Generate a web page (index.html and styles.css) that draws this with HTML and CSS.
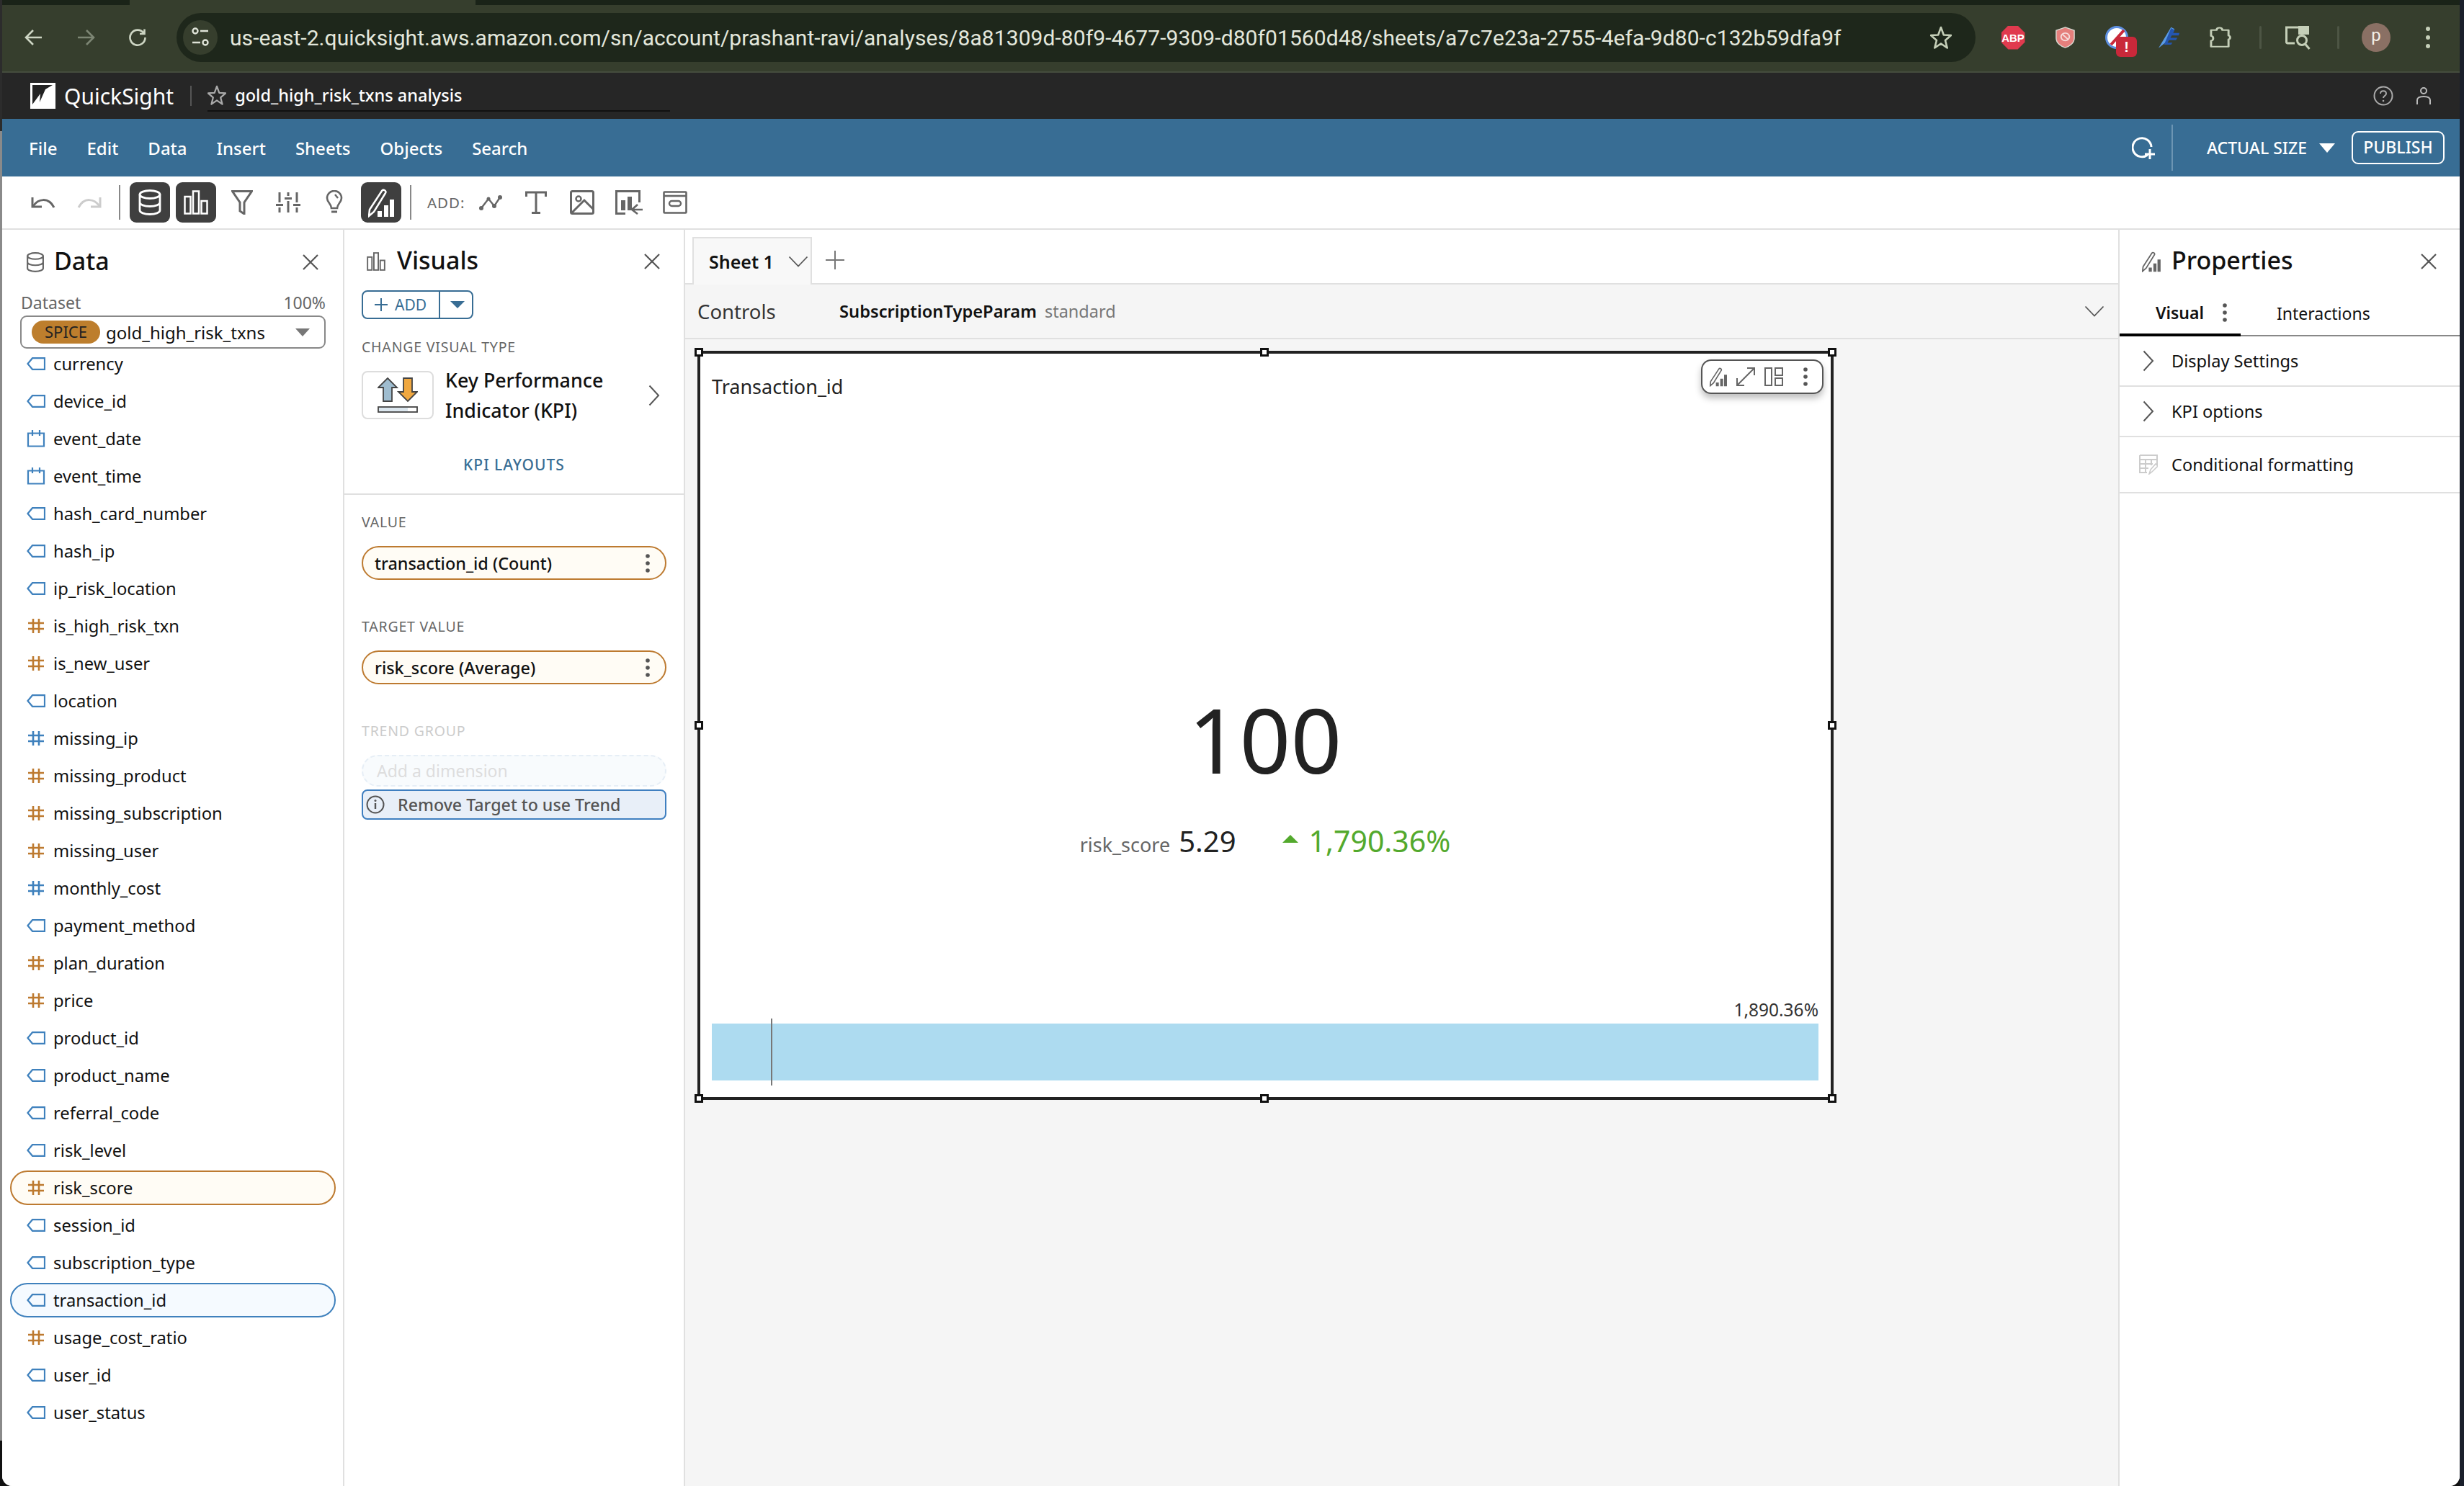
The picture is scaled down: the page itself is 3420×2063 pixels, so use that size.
FILE: index.html
```html
<!DOCTYPE html>
<html>
<head>
  <meta charset="UTF-8">
  <title>QuickSight analysis</title>
  <link rel="stylesheet" href="styles.css">
</head>
<body>

<svg class="sprite" xmlns="http://www.w3.org/2000/svg">
  <symbol id="i-tag" viewBox="0 0 26 18"><path d="M25 1.2H8L1.5 9 8 16.8h17z" fill="none" stroke="#3f81bd" stroke-width="2.2"/></symbol>
  <symbol id="i-hash-o" viewBox="0 0 26 22"><path d="M9 1v20M17 1v20M2 7h22M2 15h22" fill="none" stroke="#bd7a30" stroke-width="2.6"/></symbol>
  <symbol id="i-hash-b" viewBox="0 0 26 22"><path d="M9 1v20M17 1v20M2 7h22M2 15h22" fill="none" stroke="#3f81bd" stroke-width="2.6"/></symbol>
  <symbol id="i-cal" viewBox="0 0 26 24"><path d="M2 4.500h22v18H2zM8 0v8M18 0v8" fill="none" stroke="#3f81bd" stroke-width="2.200"/></symbol>
  <symbol id="i-close" viewBox="0 0 24 24"><path d="M2 2l20 20M22 2L2 22" fill="none" stroke="#555" stroke-width="2.200"/></symbol>
  <symbol id="i-right" viewBox="0 0 16 30"><path d="M1.500 1.500L14 15 1.500 28.500" fill="none" stroke="#555" stroke-width="2"/></symbol>
  <symbol id="i-down" viewBox="0 0 28 16"><path d="M1.500 1.500L14 14.500 26.500 1.500" fill="none" stroke="#555" stroke-width="1.800"/></symbol>
  <symbol id="i-db" viewBox="0 0 32 36"><g fill="none" stroke="currentColor" stroke-width="2.800"><ellipse cx="16" cy="7" rx="14" ry="5.500"/><path d="M2 7v22c0 3 6 5.500 14 5.500S30 32 30 29V7M2 18c0 3 6 5.500 14 5.500S30 21 30 18"/></g></symbol>
  <symbol id="i-bars" viewBox="0 0 34 34"><g fill="none" stroke="currentColor" stroke-width="2.500"><rect x="1.500" y="9" width="8" height="23.500"/><rect x="13" y="1.500" width="8" height="31"/><rect x="24.500" y="15" width="8" height="17.500"/></g></symbol>
  <symbol id="i-pencil" viewBox="0 0 36 42"><path d="M2 31L19 5c2-3 7 0 5 3L8 34l-7 6z" fill="none" stroke="currentColor" stroke-width="2.500"/><path d="M13 33h6v8h-6zM22 25h6v16h-6zM30 17h6v24h-6z" fill="currentColor"/></symbol>
  <symbol id="i-kebab" viewBox="0 0 6 26"><circle cx="3" cy="3" r="2.800" fill="#555"/><circle cx="3" cy="13" r="2.800" fill="#555"/><circle cx="3" cy="23" r="2.800" fill="#555"/></symbol>
  <symbol id="i-star" viewBox="0 0 30 32"><path d="M15 2l3.800 10.500L29 13l-8 7 2.700 10.500L15 24.500l-8.700 6L9 20l-8-7 10.200-.5z" fill="none" stroke="currentColor" stroke-width="2.600" stroke-linejoin="round"/></symbol>
</svg>

<div class="window">

  <div class="tabstrip"><div class="tabstrip-tab"></div></div>
  <div class="browser-bar">
    <div class="nav-btn"><svg width="26" height="24" viewBox="0 0 26 24"><path d="M24 12H3M12 2L2 12l10 10" fill="none" stroke="#cdd5c3" stroke-width="2.600"/></svg></div>
    <div class="nav-btn"><svg width="26" height="24" viewBox="0 0 26 24"><path d="M2 12h21M14 2l10 10-10 10" fill="none" stroke="#7d8674" stroke-width="2.600"/></svg></div>
    <div class="nav-btn"><svg width="26" height="26" viewBox="0 0 26 26"><path d="M21.500 7A10.500 10.500 0 1 0 23.500 13M22.500 1.500V8H16" fill="none" stroke="#cdd5c3" stroke-width="2.600"/></svg></div>
    <div class="url-pill">
      <div class="url-chip"><svg width="26" height="30" viewBox="0 0 26 30"><g fill="none" stroke="#dfe3d8" stroke-width="2.400"><circle cx="6" cy="6" r="3.500"/><path d="M13 6h11M2 22h11"/><circle cx="20" cy="22" r="3.500"/></g></svg></div>
      <span class="url-text">us-east-2.quicksight.aws.amazon.com/sn/account/prashant-ravi/analyses/8a81309d-80f9-4677-9309-d80f01560d48/sheets/a7c7e23a-2755-4efa-9d80-c132b59dfa9f</span>
      <svg class="url-star" width="30" height="32"><use href="#i-star"/></svg>
    </div>
    <div class="ext ext-first"><span class="abp">ABP</span></div>
    <div class="ext"><svg width="29" height="30" viewBox="0 0 30 34" preserveAspectRatio="none"><path d="M15 1l13 5v12c0 8-7 13-13 15C9 31 2 26 2 18V6z" fill="#e57f7c" stroke="#d8d8d0" stroke-width="1.500"/><circle cx="15" cy="16" r="6" fill="none" stroke="#f6dcdb" stroke-width="2"/><path d="M11 12l8 8" stroke="#f6dcdb" stroke-width="2"/></svg></div>
    <div class="ext ext-badged">
      <svg width="32" height="34" viewBox="0 0 32 34"><circle cx="16" cy="17" r="14.500" fill="#fff" stroke="#5d8fe0" stroke-width="3"/><path d="M8 27L26 7" stroke="#c9283a" stroke-width="4"/></svg>
      <span class="ext-badge">!</span>
    </div>
    <div class="ext"><svg width="31" height="31" viewBox="0 0 32 46" preserveAspectRatio="none"><path d="M1 44L19 1l5 4-8 22z" fill="#5a9be6"/><path d="M19 3l5 4-2 6h9l-1 5h-10l-2 5h10l-2 5H16l-2 5h7l-2 4H9z" fill="#2456b0"/></svg></div>
    <div class="ext"><svg width="31" height="32" viewBox="0 0 32 50" preserveAspectRatio="none"><path d="M2 9h8c0-3 1-5 4-5s4 2 4 5h9v12c3 0 3 8 0 8v16H2V32c4 0 4-10 0-10z" fill="none" stroke="#c5cfb8" stroke-width="3" stroke-linejoin="round"/></svg></div>
    <div class="tool-sep"></div>
    <div class="ext"><svg width="36" height="34" viewBox="0 0 36 34"><path d="M13 25H3a1.500 1.500 0 0 1-1.500-1.500V3H20" fill="none" stroke="#c5cfb8" stroke-width="3"/><path d="M18 1h15v12H18z" fill="#c5cfb8"/><circle cx="23" cy="21" r="6.500" fill="none" stroke="#c5cfb8" stroke-width="3"/><path d="M27.500 26l6 7" stroke="#c5cfb8" stroke-width="3"/></svg></div>
    <div class="tool-sep"></div>
    <div class="ext"><span class="avatar">p</span></div>
    <div class="ext"><svg width="6" height="30" viewBox="0 0 6 30"><circle cx="3" cy="3" r="3" fill="#c5cfb8"/><circle cx="3" cy="15" r="3" fill="#c5cfb8"/><circle cx="3" cy="27" r="3" fill="#c5cfb8"/></svg></div>
  </div>

  <div class="qs-bar">
    <svg class="qs-logo" width="35" height="36" viewBox="0 0 35 36"><rect width="35" height="36" fill="#fff"/><path d="M3 3h28L21 9 13 27l1-12L3 30z" fill="#222"/></svg>
    <span class="qs-name">QuickSight</span>
    <div class="qs-sep"></div>
    <div class="qs-title">
      <svg width="26" height="28" class="qs-star"><use href="#i-star"/></svg>
      <span>gold_high_risk_txns analysis</span>
    </div>
    <svg class="qs-help" width="28" height="28" viewBox="0 0 28 28"><circle cx="14" cy="14" r="12.500" fill="none" stroke="#aaa" stroke-width="2"/><path d="M10 11c0-5 8-5 8 0 0 3-4 3-4 6" fill="none" stroke="#aaa" stroke-width="2"/><circle cx="14" cy="21" r="1.300" fill="#aaa"/></svg>
    <svg class="qs-user" width="22" height="24" viewBox="0 0 22 24"><circle cx="11" cy="5" r="4" fill="none" stroke="#bbb" stroke-width="2"/><path d="M2 24v-6c0-3 3-5 9-5s9 2 9 5v6" fill="none" stroke="#bbb" stroke-width="2"/></svg>
  </div>

  <div class="menu-bar">
    <span class="menu-item">File</span>
    <span class="menu-item">Edit</span>
    <span class="menu-item">Data</span>
    <span class="menu-item">Insert</span>
    <span class="menu-item">Sheets</span>
    <span class="menu-item">Objects</span>
    <span class="menu-item">Search</span>
    <svg class="menu-refresh" width="34" height="34" viewBox="0 0 34 34"><path d="M22 27A13 13 0 1 1 27 16" fill="none" stroke="#fff" stroke-width="3"/><path d="M25 19v14M18 26h14" stroke="#fff" stroke-width="3"/></svg>
    <div class="menu-sep"></div>
    <span class="menu-size">ACTUAL SIZE</span>
    <span class="menu-caret"></span>
    <span class="publish">PUBLISH</span>
  </div>

  <div class="toolbar">
    <svg class="tb-undo" width="34" height="16" viewBox="0 0 34 16"><path d="M2 1v13h13" fill="none" stroke="#666" stroke-width="3"/><path d="M3 13C10 3 24 0 32 15" fill="none" stroke="#666" stroke-width="3"/></svg>
    <svg class="tb-redo" width="34" height="16" viewBox="0 0 34 16"><path d="M32 1v13H19" fill="none" stroke="#ccc" stroke-width="3"/><path d="M31 13C24 3 10 0 2 15" fill="none" stroke="#ccc" stroke-width="3"/></svg>
    <div class="tb-sep tb-sep-a"></div>
    <div class="tb-btn tb-dark tb-first"><svg width="32" height="36"><use href="#i-db"/></svg></div>
    <div class="tb-btn tb-dark"><svg width="34" height="34"><use href="#i-bars"/></svg></div>
    <svg class="tb-funnel" width="30" height="34" viewBox="0 0 30 34"><path d="M1.500 1.500h27L18 17v16l-6-4V17z" fill="none" stroke="#666" stroke-width="3"/></svg>
    <svg class="tb-sliders" width="34" height="28" viewBox="0 0 34 28"><path d="M5 0v14M5 21v7M17 0v5M17 12v16M29 0v14M29 21v7M0 17.500h10M12 8.500h10M24 17.500h10" fill="none" stroke="#666" stroke-width="3"/></svg>
    <svg class="tb-bulb" width="24" height="34" viewBox="0 0 24 34"><path d="M8 25c0-6-6-8-6-14a10 10 0 0 1 20 0c0 6-6 8-6 14z" fill="none" stroke="#666" stroke-width="2.600"/><path d="M8 30h8" stroke="#666" stroke-width="3"/><path d="M13 6l4 5" stroke="#666" stroke-width="2.400"/></svg>
    <div class="tb-btn tb-dark tb-third"><svg width="36" height="42"><use href="#i-pencil"/></svg></div>
    <div class="tb-sep tb-sep-b"></div>
    <span class="tb-add">ADD:</span>
    <svg class="tb-line" width="32" height="22" viewBox="0 0 32 22"><path d="M3 19L13 6l8 10L29 4" fill="none" stroke="#666" stroke-width="2.400"/><circle cx="3" cy="19" r="3" fill="#666"/><circle cx="13" cy="6" r="2.500" fill="#666"/><circle cx="21" cy="16" r="3" fill="#666"/><circle cx="29" cy="4" r="3" fill="#666"/></svg>
    <svg class="tb-text" width="30" height="32" viewBox="0 0 30 32"><path d="M1.500 8V2h27v6M15 2v29M9 30.500h12" fill="none" stroke="#666" stroke-width="3"/></svg>
    <svg class="tb-image" width="34" height="34" viewBox="0 0 34 34"><rect x="1.500" y="1.500" width="31" height="31" rx="2" fill="none" stroke="#666" stroke-width="3"/><circle cx="12" cy="12" r="3.500" fill="none" stroke="#666" stroke-width="2.500"/><path d="M3 31l17-17 13 13" fill="none" stroke="#666" stroke-width="3"/></svg>
    <svg class="tb-import" width="38" height="34" viewBox="0 0 38 34"><path d="M14 32.500H1.500v-31h32V17" fill="none" stroke="#666" stroke-width="3"/><path d="M8 14h6v14H8zM17 9h6v19h-6z" fill="#666"/><path d="M38 27H24M31 20l-8 7 8 6" fill="none" stroke="#666" stroke-width="2.600"/></svg>
    <svg class="tb-link" width="34" height="32" viewBox="0 0 34 32"><rect x="1.500" y="1.500" width="31" height="29" rx="1" fill="none" stroke="#666" stroke-width="2.600"/><path d="M2 7h30" stroke="#666" stroke-width="2.600"/><rect x="9" y="14" width="16" height="7" rx="3.500" fill="none" stroke="#666" stroke-width="2.400"/></svg>
  </div>

  <div class="main">

    <aside class="panel panel-data">
      <div class="panel-head">
        <svg class="head-icon" width="26" height="28" color="#666"><use href="#i-db"/></svg>
        <span class="panel-title">Data</span>
        <svg class="panel-close" width="24" height="24"><use href="#i-close"/></svg>
      </div>
      <div class="dataset-row"><span>Dataset</span><span>100%</span></div>
      <div class="dataset-select">
        <span class="spice">SPICE</span>
        <span class="dataset-name">gold_high_risk_txns</span>
        <span class="select-caret"></span>
      </div>
      <ul class="fields">
        <li class="field"><svg width="26" height="18"><use href="#i-tag"/></svg>currency</li>
        <li class="field"><svg width="26" height="18"><use href="#i-tag"/></svg>device_id</li>
        <li class="field"><svg width="26" height="24"><use href="#i-cal"/></svg>event_date</li>
        <li class="field"><svg width="26" height="24"><use href="#i-cal"/></svg>event_time</li>
        <li class="field"><svg width="26" height="18"><use href="#i-tag"/></svg>hash_card_number</li>
        <li class="field"><svg width="26" height="18"><use href="#i-tag"/></svg>hash_ip</li>
        <li class="field"><svg width="26" height="18"><use href="#i-tag"/></svg>ip_risk_location</li>
        <li class="field"><svg width="26" height="22"><use href="#i-hash-o"/></svg>is_high_risk_txn</li>
        <li class="field"><svg width="26" height="22"><use href="#i-hash-o"/></svg>is_new_user</li>
        <li class="field"><svg width="26" height="18"><use href="#i-tag"/></svg>location</li>
        <li class="field"><svg width="26" height="22"><use href="#i-hash-b"/></svg>missing_ip</li>
        <li class="field"><svg width="26" height="22"><use href="#i-hash-o"/></svg>missing_product</li>
        <li class="field"><svg width="26" height="22"><use href="#i-hash-o"/></svg>missing_subscription</li>
        <li class="field"><svg width="26" height="22"><use href="#i-hash-o"/></svg>missing_user</li>
        <li class="field"><svg width="26" height="22"><use href="#i-hash-b"/></svg>monthly_cost</li>
        <li class="field"><svg width="26" height="18"><use href="#i-tag"/></svg>payment_method</li>
        <li class="field"><svg width="26" height="22"><use href="#i-hash-o"/></svg>plan_duration</li>
        <li class="field"><svg width="26" height="22"><use href="#i-hash-o"/></svg>price</li>
        <li class="field"><svg width="26" height="18"><use href="#i-tag"/></svg>product_id</li>
        <li class="field"><svg width="26" height="18"><use href="#i-tag"/></svg>product_name</li>
        <li class="field"><svg width="26" height="18"><use href="#i-tag"/></svg>referral_code</li>
        <li class="field"><svg width="26" height="18"><use href="#i-tag"/></svg>risk_level</li>
        <li class="field field-measure"><svg width="26" height="22"><use href="#i-hash-o"/></svg>risk_score</li>
        <li class="field"><svg width="26" height="18"><use href="#i-tag"/></svg>session_id</li>
        <li class="field"><svg width="26" height="18"><use href="#i-tag"/></svg>subscription_type</li>
        <li class="field field-dim"><svg width="26" height="18"><use href="#i-tag"/></svg>transaction_id</li>
        <li class="field"><svg width="26" height="22"><use href="#i-hash-o"/></svg>usage_cost_ratio</li>
        <li class="field"><svg width="26" height="18"><use href="#i-tag"/></svg>user_id</li>
        <li class="field"><svg width="26" height="18"><use href="#i-tag"/></svg>user_status</li>
      </ul>
    </aside>

    <aside class="panel panel-visuals">
      <div class="panel-head">
        <svg class="head-icon" width="26" height="26" color="#666"><use href="#i-bars"/></svg>
        <span class="panel-title">Visuals</span>
        <svg class="panel-close" width="24" height="24"><use href="#i-close"/></svg>
      </div>
      <div class="visuals-top">
        <div class="add-split">
          <span class="add-main"><svg width="18" height="18" viewBox="0 0 18 18"><path d="M9 0v18M0 9h18" stroke="#386d94" stroke-width="2"/></svg>ADD</span>
          <span class="add-caret"></span>
        </div>
        <div class="well-label label-type">CHANGE VISUAL TYPE</div>
        <div class="type-row">
          <div class="type-icon">
            <svg width="56" height="50" viewBox="0 0 56 50">
              <path d="M14 1L27 14H20V33H8V14H1z" fill="#9fbdd0" stroke="#444" stroke-width="1.800"/>
              <path d="M36 1H48V20H55L42 33 29 20H36z" fill="#f0a840" stroke="#444" stroke-width="1.800"/>
              <rect x="1" y="41" width="54" height="7" fill="#fff" stroke="#444" stroke-width="1.800"/>
              <rect x="2" y="42" width="40" height="5" fill="#dbe6ee"/>
            </svg>
          </div>
          <div class="type-name">Key Performance<br>Indicator (KPI)</div>
          <svg class="type-chevron" width="16" height="30"><use href="#i-right"/></svg>
        </div>
        <div class="kpi-layouts">KPI LAYOUTS</div>
      </div>
      <div class="wells">
        <div class="well-label">VALUE</div>
        <div class="well-pill">transaction_id (Count)<svg width="6" height="26"><use href="#i-kebab"/></svg></div>
        <div class="well-label label-next">TARGET VALUE</div>
        <div class="well-pill">risk_score (Average)<svg width="6" height="26"><use href="#i-kebab"/></svg></div>
        <div class="well-label label-next label-off">TREND GROUP</div>
        <div class="well-empty">Add a dimension</div>
        <div class="well-note">
          <svg width="26" height="26" viewBox="0 0 26 26"><circle cx="13" cy="13" r="11.500" fill="none" stroke="#555" stroke-width="2"/><path d="M13 11v8" stroke="#555" stroke-width="2.400"/><circle cx="13" cy="7.500" r="1.500" fill="#555"/></svg>
          Remove Target to use Trend
        </div>
      </div>
    </aside>

    <section class="sheet">
      <div class="sheet-tabs">
        <div class="sheet-tab">Sheet 1<svg width="28" height="16"><use href="#i-down"/></svg></div>
        <svg class="sheet-plus" width="26" height="26" viewBox="0 0 26 26"><path d="M13 0v26M0 13h26" stroke="#777" stroke-width="2"/></svg>
      </div>
      <div class="controls">
        <span class="controls-label">Controls</span>
        <span class="param-name">SubscriptionTypeParam</span>
        <span class="param-value">standard</span>
        <svg class="controls-chevron" width="28" height="16"><use href="#i-down"/></svg>
      </div>
      <div class="canvas">
        <div class="visual">
          <span class="handle h-tl"></span><span class="handle h-tc"></span><span class="handle h-tr"></span>
          <span class="handle h-ml"></span><span class="handle h-mr"></span>
          <span class="handle h-bl"></span><span class="handle h-bc"></span><span class="handle h-br"></span>

          <div class="visual-menu">
            <svg width="24" height="28" color="#666"><use href="#i-pencil"/></svg>
            <svg width="26" height="26" viewBox="0 0 26 26"><path d="M1 25L25 1M15 1h10v10M1 15v10h10" fill="none" stroke="#666" stroke-width="2"/></svg>
            <svg width="26" height="26" viewBox="0 0 26 26"><path d="M1 1h9v24H1zM15 1h10v10H15zM15 15h10v10H15z" fill="none" stroke="#666" stroke-width="2"/></svg>
            <svg width="6" height="26"><use href="#i-kebab"/></svg>
          </div>

          <div class="visual-title">Transaction_id</div>
          <div class="kpi-value">100</div>
          <div class="kpi-sub">
            <span class="kpi-target-name">risk_score</span>
            <span class="kpi-target">5.29</span>
            <span class="kpi-arrow"></span>
            <span class="kpi-delta">1,790.36%</span>
          </div>
          <div class="kpi-bar-label">1,890.36%</div>
          <div class="kpi-bar"><span class="kpi-tick"></span></div>
        </div>
      </div>
    </section>

    <aside class="panel panel-props">
      <div class="panel-head">
        <svg class="head-icon" width="26" height="30" color="#666"><use href="#i-pencil"/></svg>
        <span class="panel-title">Properties</span>
        <svg class="panel-close" width="24" height="24"><use href="#i-close"/></svg>
      </div>
      <div class="prop-tabs">
        <div class="prop-tab prop-tab-on">Visual<svg width="6" height="26"><use href="#i-kebab"/></svg></div>
        <div class="prop-tab">Interactions</div>
      </div>
      <div class="prop-row prop-a"><svg width="16" height="30"><use href="#i-right"/></svg>Display Settings</div>
      <div class="prop-row prop-a"><svg width="16" height="30"><use href="#i-right"/></svg>KPI options</div>
      <div class="prop-row prop-b">
        <svg width="26" height="28" viewBox="0 0 26 28"><path d="M1 1h24v14M1 1v24h10M1 7h24M1 13h18M1 19h12M9 7v18M17 7v8" fill="none" stroke="#ccc" stroke-width="2"/><path d="M14 27l2-6 7-8 3 3-8 8z" fill="none" stroke="#ccc" stroke-width="1.600"/></svg>
        Conditional formatting
      </div>
    </aside>

  </div>
</div>

</body>
</html>
```

FILE: styles.css
```css
* { box-sizing: border-box; }

html, body { margin: 0; padding: 0; }

body {
  width: 3420px;
  height: 2063px;
  overflow: hidden;
  font: 24px "Noto Sans", sans-serif;
  color: #111;
  background:
    linear-gradient(#1a1f2b, #1a1f2b) right top / 6px 100% no-repeat,
    linear-gradient(#2c2c2c 0 182px, #8a8a8a 182px 2000px, #111 2000px);
}

.sprite { display: none; }

.window {
  width: 3411px;
  height: 2063px;
  margin-left: 3px;
  display: flex;
  flex-direction: column;
  background: #fff;
  border-radius: 0 0 14px 14px;
  overflow: hidden;
}

/* browser chrome */
.tabstrip { height: 7px; background: #1a2318; flex: none; }
.tabstrip-tab { width: 480px; height: 7px; margin-left: 177px; background: #363e2d; }

.browser-bar {
  height: 94px;
  flex: none;
  display: flex;
  align-items: center;
  padding: 0 0 2px 8px;
  background: #363e2d;
  border-bottom: 2px solid #454c3d;
}
.nav-btn { width: 72px; display: flex; justify-content: center; }
.url-pill {
  width: 2497px;
  height: 68px;
  margin-left: 18px;
  padding-left: 9px;
  padding-right: 33px;
  display: flex;
  align-items: center;
  border-radius: 34px;
  background: #1e271b;
}
.url-chip {
  width: 48px;
  height: 48px;
  border-radius: 24px;
  background: #363e2d;
  display: flex;
  align-items: center;
  justify-content: center;
  flex: none;
}
.url-text {
  margin-left: 17px;
  font: 30px Roboto, sans-serif;
  letter-spacing: 0.07px;
  color: #e3e7dc;
  white-space: nowrap;
}
.url-star { margin-left: auto; color: #c5cfb8; flex: none; }

.ext { width: 72px; display: flex; justify-content: center; align-items: center; position: relative; flex: none; }
.ext-first { margin-left: 16px; }
.abp {
  width: 33px;
  height: 33px;
  background: #e03a4e;
  color: #fff;
  font: bold 15px/33px "Liberation Sans", sans-serif;
  text-align: center;
  clip-path: polygon(30% 0, 70% 0, 100% 30%, 100% 70%, 70% 100%, 30% 100%, 0 70%, 0 30%);
}
.ext-badge {
  position: absolute;
  left: 35px;
  top: 16px;
  width: 29px;
  height: 28px;
  border-radius: 6px;
  background: #c9283a;
  color: #fff;
  font: bold 20px/28px "Liberation Sans", sans-serif;
  text-align: center;
}
.tool-sep { width: 3px; height: 32px; margin: 0 15px 0 18px; background: #4d5544; border-radius: 2px; flex: none; }
.avatar {
  width: 40px;
  height: 40px;
  border-radius: 20px;
  background: #8a7064;
  color: #f4efe9;
  font: 24px/34px Roboto, sans-serif;
  text-align: center;
}

/* quicksight header */
.qs-bar {
  height: 64px;
  flex: none;
  display: flex;
  align-items: center;
  background: #262626;
  color: #fff;
}
.qs-logo { margin-left: 39px; flex: none; }
.qs-name { margin-left: 12px; font-size: 30px; }
.qs-sep { width: 2px; height: 28px; margin-left: 23px; background: #555; }
.qs-title {
  width: 642px;
  height: 44px;
  margin-left: 22px;
  display: flex;
  align-items: center;
  border-bottom: 2px solid #111;
  font-weight: 500;
  font-size: 23.500px;
}
.qs-star { color: #aaa; flex: none; margin-right: 12px; }
.qs-help { margin-left: auto; }
.qs-user { margin-left: 31px; margin-right: 39px; }

/* menu bar */
.menu-bar {
  height: 80px;
  flex: none;
  display: flex;
  align-items: center;
  padding-left: 37px;
  background: #386d94;
  color: #fff;
  font-weight: 500;
}
.menu-item { margin-right: 41px; }
.menu-refresh { margin-left: auto; }
.menu-sep { width: 2px; height: 64px; margin-left: 21px; background: #6d95b3; }
.menu-size { margin-left: 47px; font-size: 23px; }
.menu-caret {
  margin-left: 17px;
  border-left: 11px solid transparent;
  border-right: 11px solid transparent;
  border-top: 13px solid #fff;
}
.publish {
  width: 129px;
  height: 46px;
  margin: 0 21px 0 23px;
  border: 2.500px solid #fff;
  border-radius: 9px;
  text-align: center;
  font-size: 23px;
  line-height: 40px;
}

/* toolbar */
.toolbar {
  height: 74px;
  flex: none;
  display: flex;
  align-items: center;
  border-bottom: 2px solid #e0e0e0;
}
.toolbar svg { flex: none; }
.tb-undo { margin-left: 40px; }
.tb-redo { margin-left: 30px; }
.tb-sep { width: 2px; height: 48px; background: #888; }
.tb-sep-a { margin-left: 24px; }
.tb-btn { width: 56px; height: 56px; display: flex; align-items: center; justify-content: center; border-radius: 9px; }
.tb-dark { background: #3f3f3f; color: #fff; margin-left: 8px; }
.tb-first { margin-left: 13px; }
.tb-funnel { margin-left: 21px; }
.tb-sliders { margin-left: 32px; }
.tb-bulb { margin-left: 35px; }
.tb-third { margin-left: 25px; }
.tb-sep-b { margin-left: 12px; }
.tb-add { margin-left: 22px; font-size: 20.500px; color: #666; letter-spacing: 1px; }
.tb-line { margin-left: 19px; }
.tb-text { margin-left: 32px; }
.tb-image { margin-left: 32px; }
.tb-import { margin-left: 29px; }
.tb-link { margin-left: 28px; }

/* panels */
.main { flex: 1; display: flex; min-height: 0; }
.panel { flex: none; background: #fff; }
.panel-data { width: 475px; border-right: 2px solid #e0e0e0; }
.panel-visuals { width: 473px; border-right: 2px solid #e0e0e0; }
.panel-props { width: 474px; border-left: 2px solid #e0e0e0; }

.panel-head {
  height: 60px;
  margin-top: 15px;
  display: flex;
  align-items: center;
}
.panel-title { font-size: 34px; font-weight: 500; margin-bottom: 4px; }
.panel-close { margin-left: auto; flex: none; }
.head-icon { flex: none; }

.panel-data .panel-head { padding: 0 33px 0 33px; margin-bottom: 13px; }
.panel-data .panel-title { margin-left: 13px; }
.panel-visuals .panel-head { padding: 0 32px 0 31px; margin-top: 14px; margin-bottom: 10px; }
.panel-visuals .panel-title { margin-left: 16px; }
.panel-props .panel-head { padding: 0 31px 0 31px; margin-top: 14px; margin-bottom: 10px; }
.panel-props .panel-title { margin-left: 15px; }

.dataset-row {
  height: 26px;
  padding: 0 24px 0 26px;
  display: flex;
  justify-content: space-between;
  align-items: center;
  color: #666;
  font-size: 23px;
}
.dataset-select {
  height: 46px;
  margin: 5px 24px 0 25px;
  padding: 0 20px 0 14px;
  display: flex;
  align-items: center;
  position: relative;
  z-index: 1;
  background: #fff;
  border: 2px solid #888;
  border-radius: 9px;
}
.spice {
  width: 95px;
  height: 32px;
  border-radius: 16px;
  background: #bd7e2d;
  color: #222;
  text-align: center;
  font-size: 22px;
  line-height: 31px;
}
.dataset-name { margin-left: 8px; }
.select-caret {
  margin-left: auto;
  border-left: 10px solid transparent;
  border-right: 10px solid transparent;
  border-top: 11px solid #777;
}

.fields { list-style: none; margin: -5px 0 0 11px; padding: 0; width: 452px; font-size: 23.750px; }
.field {
  height: 48px;
  margin: 2px 0 4px;
  padding-left: 21px;
  display: flex;
  align-items: center;
  gap: 11px;
  border: 2px solid transparent;
  border-radius: 24px;
  white-space: nowrap;
}
.field svg { flex: none; }
.field-measure { background: #fffcf5; border-color: #bd7a30; }
.field-dim { background: #f5faff; border-color: #3f81bd; }

.visuals-top { padding: 0 24px; }
.add-split {
  width: 155px;
  height: 40px;
  display: flex;
  border: 2px solid #386d94;
  border-radius: 8px;
  color: #386d94;
  font-size: 21px;
}
.add-main {
  width: 107px;
  padding-left: 16px;
  display: flex;
  align-items: center;
  gap: 10px;
  border-right: 2px solid #386d94;
}
.add-caret {
  margin: 13px 0 0 14px;
  height: 0;
  border-left: 10px solid transparent;
  border-right: 10px solid transparent;
  border-top: 10px solid #386d94;
}
.well-label { font-size: 19.500px; line-height: 24px; color: #666; letter-spacing: 0.8px; }
.label-type { margin-top: 27px; }
.type-row { height: 67px; margin-top: 21px; display: flex; align-items: center; }
.type-icon {
  width: 100px;
  height: 67px;
  display: flex;
  align-items: center;
  justify-content: center;
  border: 2px solid #ddd;
  border-radius: 8px;
  flex: none;
}
.type-name { margin-left: 16px; font-size: 26.800px; line-height: 42px; font-weight: 500; white-space: nowrap; }
.type-chevron { margin-left: auto; margin-right: 9px; flex: none; }
.kpi-layouts {
  margin-top: 51px;
  height: 24px;
  line-height: 24px;
  text-align: center;
  color: #386d94;
  font-size: 21px;
  font-weight: 500;
  letter-spacing: 1px;
}
.wells {
  margin-top: 28px;
  padding: 26px 24px 0;
  border-top: 2px solid #e0e0e0;
}
.well-pill {
  height: 47px;
  margin-top: 21px;
  padding: 0 21px 0 16px;
  display: flex;
  justify-content: space-between;
  align-items: center;
  background: #fffcf5;
  border: 2px solid #bd7a30;
  border-radius: 24px;
  font-weight: 500;
  font-size: 23.400px;
}
.label-next { margin-top: 53px; }
.label-off { color: #ccc; }
.well-empty {
  height: 44px;
  margin-top: 21px;
  padding-left: 19px;
  background: #f8fbfd;
  border: 2px dashed #e6eef6;
  border-radius: 22px;
  color: #ddd;
  font-size: 23px;
  line-height: 40px;
}
.well-note {
  height: 42px;
  margin-top: 4px;
  padding-left: 4px;
  display: flex;
  align-items: center;
  gap: 18px;
  background: #e8eff8;
  border: 2px solid #3f7fc0;
  border-radius: 8px;
  color: #555;
  font-weight: 500;
  font-size: 23.200px;
}

/* sheet */
.sheet { flex: 1; min-width: 0; display: flex; flex-direction: column; background: #f5f5f5; }
.sheet-tabs {
  height: 76px;
  flex: none;
  display: flex;
  align-items: flex-end;
  padding-left: 10px;
  background: #fff;
  border-bottom: 2px solid #e0e0e0;
}
.sheet-tab {
  width: 166px;
  height: 66px;
  margin-bottom: -2px;
  padding-left: 21px;
  display: flex;
  align-items: center;
  gap: 20px;
  background: #f8f8f8;
  border: 2px solid #e0e0e0;
  border-bottom: none;
  font-weight: 600;
  font-size: 25px;
}
.sheet-tab svg { flex: none; }
.sheet-plus { margin: 0 0 19px 19px; }
.controls {
  height: 76px;
  flex: none;
  display: flex;
  align-items: center;
  padding: 0 19px 0 17px;
  border-bottom: 2px solid #e0e0e0;
}
.controls-label { font-size: 27.500px; width: 197px; color: #333; }
.param-name { font-weight: 600; font-size: 23.700px; }
.param-value { margin-left: 11px; color: #777; font-size: 23.500px; }
.controls-chevron { margin-left: auto; }

.canvas { flex: 1; padding: 16px 0 0 17px; }
.visual {
  width: 1577px;
  height: 1040px;
  padding: 0 17px 0 16px;
  display: flex;
  flex-direction: column;
  position: relative;
  background: #fff;
  border: 4px solid #222;
}
.handle {
  position: absolute;
  width: 12px;
  height: 12px;
  background: #fff;
  border: 3px solid #111;
}
.h-tl { left: -8px; top: -8px; }
.h-tc { left: 777px; top: -8px; }
.h-tr { right: -8px; top: -8px; }
.h-ml { left: -8px; top: 510px; }
.h-mr { right: -8px; top: 510px; }
.h-bl { left: -8px; bottom: -8px; }
.h-bc { left: 777px; bottom: -8px; }
.h-br { right: -8px; bottom: -8px; }

.visual-menu {
  position: absolute;
  left: 1389px;
  top: 8px;
  width: 170px;
  height: 48px;
  padding: 0 0 0 10px;
  display: flex;
  align-items: center;
  gap: 13px;
  background: #fff;
  border: 2px solid #555;
  border-radius: 14px;
  box-shadow: 0 6px 10px rgba(0,0,0,0.25);
}
.visual-menu svg:last-child { margin-left: 15px; }

.visual-title { margin-top: 30px; font-size: 27px; line-height: 32px; color: #222; }
.kpi-value {
  margin-top: 403px;
  font-size: 124px;
  line-height: 140px;
  text-align: center;
  color: #222;
}
.kpi-sub {
  margin-top: 43px;
  height: 50px;
  display: flex;
  justify-content: center;
  align-items: baseline;
}
.kpi-target-name { font-size: 27px; color: #666; }
.kpi-target { margin-left: 12px; font-size: 40px; color: #222; }
.kpi-arrow {
  margin-left: 64px;
  align-self: center;
  border-left: 11px solid transparent;
  border-right: 11px solid transparent;
  border-bottom: 11px solid #53a92d;
}
.kpi-delta { margin-left: 15px; font-size: 41px; color: #53a92d; }
.kpi-bar-label {
  margin-top: 199px;
  line-height: 28px;
  text-align: right;
  font-size: 24.500px;
  color: #333;
}
.kpi-bar { height: 79px; margin-top: 5px; background: #addbf0; position: relative; }
.kpi-tick {
  position: absolute;
  left: 82px;
  top: -7px;
  width: 2px;
  height: 93px;
  background: #777;
}

/* properties */
.prop-tabs {
  height: 64px;
  padding-top: 2px;
  display: flex;
  align-items: center;
  border-bottom: 2px solid #888;
}
.prop-tab-on {
  width: 168px;
  height: 62px;
  margin-bottom: -2px;
  padding-left: 50px;
  display: flex;
  align-items: center;
  gap: 26px;
  border-bottom: 4px solid #000;
  font-weight: 600;
  font-size: 23px;
}
.prop-tab { font-size: 23px; }
.prop-tab-on + .prop-tab { margin-left: 50px; }
.prop-row {
  display: flex;
  align-items: center;
  gap: 24px;
  padding-left: 32px;
  border-bottom: 2px solid #e0e0e0;
  font-size: 23.600px;
}
.prop-a { height: 70px; }
.prop-b { height: 78px; padding-left: 27px; gap: 19px; }
```
